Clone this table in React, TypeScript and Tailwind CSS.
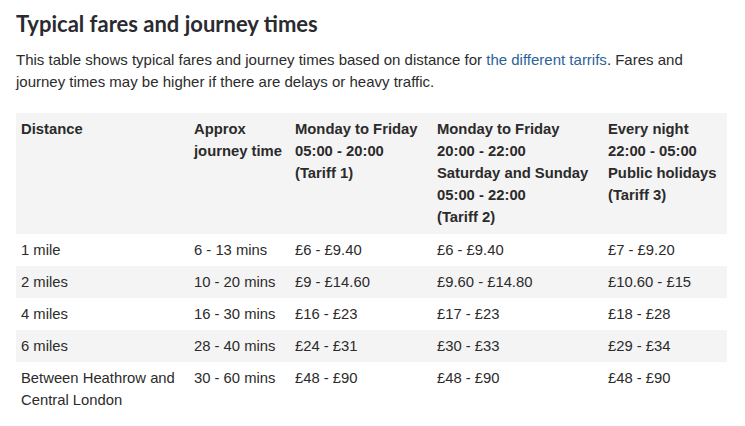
import React from "react";

const rows: [string, string, string, string, string][] = [
  ["1 mile", "6 - 13 mins", "£6 - £9.40", "£6 - £9.40", "£7 - £9.20"],
  ["2 miles", "10 - 20 mins", "£9 - £14.60", "£9.60 - £14.80", "£10.60 - £15"],
  ["4 miles", "16 - 30 mins", "£16 - £23", "£17 - £23", "£18 - £28"],
  ["6 miles", "28 - 40 mins", "£24 - £31", "£30 - £33", "£29 - £34"],
  ["Between Heathrow and Central London", "30 - 60 mins", "£48 - £90", "£48 - £90", "£48 - £90"],
];

export default function App() {
  return (
    <div className="w-[745px] h-[426px] bg-white pl-4 pt-[9px] overflow-hidden">
      <h2
        className="text-[22px] leading-[30px] font-bold text-[#2a2a30]"
        style={{ fontFamily: "Lato, 'Noto Sans', sans-serif" }}
      >
        Typical fares and journey times
      </h2>
      <p
        className="mt-[10px] text-[15px] leading-[22px] text-[#2b2b2b] w-[700px]"
        style={{ fontFamily: "'Liberation Sans', Arial, sans-serif" }}
      >
        This table shows typical fares and journey times based on distance for{" "}
        <a className="text-[#2b6298]">the different tarrifs</a>. Fares and journey times may be
        higher if there are delays or heavy traffic.
      </p>
      <table
        className="mt-[20px] w-[711px] border-collapse text-[14.8px] leading-[22px] text-[#2b2b2b]"
        style={{ fontFamily: "'Liberation Sans', Arial, sans-serif" }}
      >
        <colgroup>
          <col className="w-[173px]" />
          <col className="w-[101px]" />
          <col className="w-[142px]" />
          <col className="w-[171px]" />
          <col className="w-[124px]" />
        </colgroup>
        <thead>
          <tr className="bg-[#f4f4f4] align-top text-left">
            <th className="px-[5px] pt-[5px] pb-[6px] font-bold">Distance</th>
            <th className="px-[5px] pt-[5px] pb-[6px] font-bold">
              Approx
              <br />
              journey time
            </th>
            <th className="px-[5px] pt-[5px] pb-[6px] font-bold">
              Monday to Friday
              <br />
              05:00 - 20:00
              <br />
              (Tariff 1)
            </th>
            <th className="px-[5px] pt-[5px] pb-[6px] font-bold">
              Monday to Friday
              <br />
              20:00 - 22:00
              <br />
              Saturday and Sunday
              <br />
              05:00 - 22:00
              <br />
              (Tariff 2)
            </th>
            <th className="px-[5px] pt-[5px] pb-[6px] font-bold">
              Every night
              <br />
              22:00 - 05:00
              <br />
              Public holidays
              <br />
              (Tariff 3)
            </th>
          </tr>
        </thead>
        <tbody>
          {rows.map((r, i) => (
            <tr key={i} className={`align-top ${i % 2 === 1 ? "bg-[#f4f4f4]" : "bg-white"}`}>
              {r.map((c, j) => (
                <td key={j} className="px-[5px] py-[5px]">
                  {c}
                </td>
              ))}
            </tr>
          ))}
        </tbody>
      </table>
    </div>
  );
}
